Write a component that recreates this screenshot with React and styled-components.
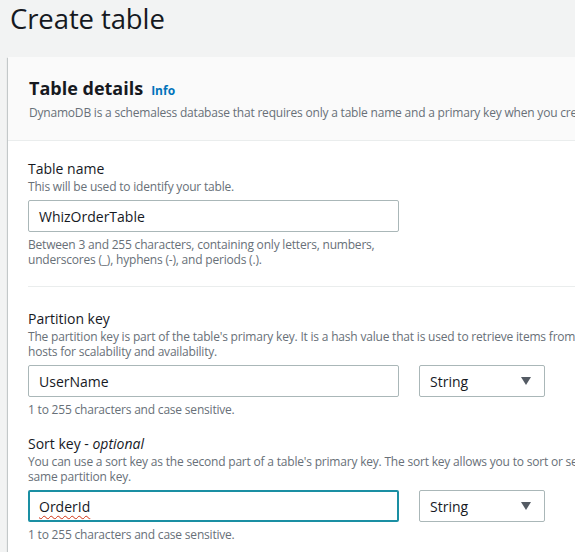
import styled, { createGlobalStyle } from 'styled-components';

const GlobalStyle = createGlobalStyle`
  html, body {
    margin: 0;
    padding: 0;
    background: #f2f3f3;
    overflow: hidden;
  }
  body {
    font-family: "Open Sans", "Noto Sans", sans-serif;
    color: #16191f;
  }
`;

const Page = styled.div`
  padding: 0 0 0 8px;
  width: 1000px;
`;

const PageTitle = styled.h1`
  margin: 0;
  padding: 2px 0 0 2px;
  font-size: 27.5px;
  font-weight: 400;
  line-height: 34px;
  letter-spacing: -0.1px;
  color: #16191f;
`;

const Card = styled.section`
  margin-top: 21px;
  width: 900px;
  background: #fff;
  box-shadow: 0 1px 1px 0 rgba(0, 28, 36, 0.3),
    1px 1px 1px 0 rgba(0, 28, 36, 0.15),
    -1px 1px 1px 0 rgba(0, 28, 36, 0.15);
`;

const CardHeader = styled.header`
  background: #fafafa;
  border-bottom: 1px solid #eaeded;
  padding: 19px 20px 20px 21px;
`;

const CardTitle = styled.h2`
  margin: 0;
  font-size: 18px;
  font-weight: 700;
  line-height: 24px;
  color: #16191f;
`;

const InfoLink = styled.a`
  margin-left: 8px;
  font-size: 12px;
  font-weight: 700;
  color: #0073bb;
  text-decoration: none;
`;

const Description = styled.p`
  margin: ${(p) => (p.$top ? `${p.$top}px` : '0')} 0 0;
  font-size: 12px;
  line-height: 15px;
  letter-spacing: -0.2px;
  color: #687078;
  white-space: nowrap;
`;

const CardBody = styled.div`
  padding: 0 20px 0 20px;
`;

const Section = styled.div`
  padding: ${(p) => (p.$divided ? '22px' : '18px')} 0 19px;
  border-top: ${(p) => (p.$divided ? '1px solid #eaeded' : 'none')};
  display: flex;
  flex-direction: column;
  gap: 17px;
`;

const Field = styled.div`
  display: flex;
  flex-direction: column;
`;

const Label = styled.label`
  font-size: 14px;
  line-height: 20px;
  color: #16191f;

  em {
    font-style: italic;
  }
`;

const Controls = styled.div`
  display: flex;
  gap: 20px;
  margin-top: 6px;
`;

const TextInput = styled.div`
  box-sizing: border-box;
  width: 371px;
  height: 32px;
  padding: 0 10px;
  border: 1px solid #aab7b8;
  border-radius: 2px;
  display: flex;
  align-items: center;
  font-size: 14px;
  color: #16191f;
  background: #fff;
  ${(p) =>
    p.$focused &&
    `
    border: 2px solid #1a8fa3;
    padding: 0 9px;
  `}
`;

const Misspelled = styled.span`
  text-decoration: underline wavy #d13212;
  text-decoration-thickness: 1px;
  text-underline-offset: 3px;
`;

const Select = styled.div`
  box-sizing: border-box;
  width: 126px;
  height: 32px;
  padding: 0 13px 0 10px;
  border: 1px solid #aab7b8;
  border-radius: 2px;
  display: flex;
  align-items: center;
  justify-content: space-between;
  font-size: 14px;
  color: #16191f;
  background: #fff;
`;

const Caret = styled.span`
  width: 0;
  height: 0;
  border-left: 5px solid transparent;
  border-right: 5px solid transparent;
  border-top: 8px solid #545b64;
`;

const Help = styled.p`
  margin: 5px 0 0;
  font-size: 12px;
  line-height: 15px;
  letter-spacing: -0.2px;
  color: #687078;
`;

const KeyField = ({ label, optional, description, value, focused }) => (
  <Field>
    <Label>
      {label}
      {optional && (
        <>
          {' - '}
          <em>optional</em>
        </>
      )}
    </Label>
    {description.map((line) => (
      <Description key={line}>{line}</Description>
    ))}
    <Controls>
      <TextInput $focused={focused}>
        {focused ? <Misspelled>{value}</Misspelled> : value}
      </TextInput>
      <Select>
        <span>String</span>
        <Caret />
      </Select>
    </Controls>
    <Help>1 to 255 characters and case sensitive.</Help>
  </Field>
);

export default function App() {
  return (
    <>
      <GlobalStyle />
      <Page>
        <PageTitle>Create table</PageTitle>
        <Card>
          <CardHeader>
            <CardTitle>
              Table details<InfoLink href="#">Info</InfoLink>
            </CardTitle>
            <Description $top={2}>
              DynamoDB is a schemaless database that requires only a table name and a primary key when you create the table.
            </Description>
          </CardHeader>
          <CardBody>
            <Section>
              <Field>
                <Label>Table name</Label>
                <Description>This will be used to identify your table.</Description>
                <Controls>
                  <TextInput>WhizOrderTable</TextInput>
                </Controls>
                <Help>
                  Between 3 and 255 characters, containing only letters, numbers,
                  <br />
                  underscores (_), hyphens (-), and periods (.).
                </Help>
              </Field>
            </Section>
            <Section $divided>
              <KeyField
                label="Partition key"
                description={[
                  "The partition key is part of the table's primary key. It is a hash value that is used to retrieve items from your table and allocate data across",
                  'hosts for scalability and availability.',
                ]}
                value="UserName"
              />
              <KeyField
                label="Sort key"
                optional
                description={[
                  "You can use a sort key as the second part of a table's primary key. The sort key allows you to sort or search among all items sharing the",
                  'same partition key.',
                ]}
                value="OrderId"
                focused
              />
            </Section>
          </CardBody>
        </Card>
      </Page>
    </>
  );
}
